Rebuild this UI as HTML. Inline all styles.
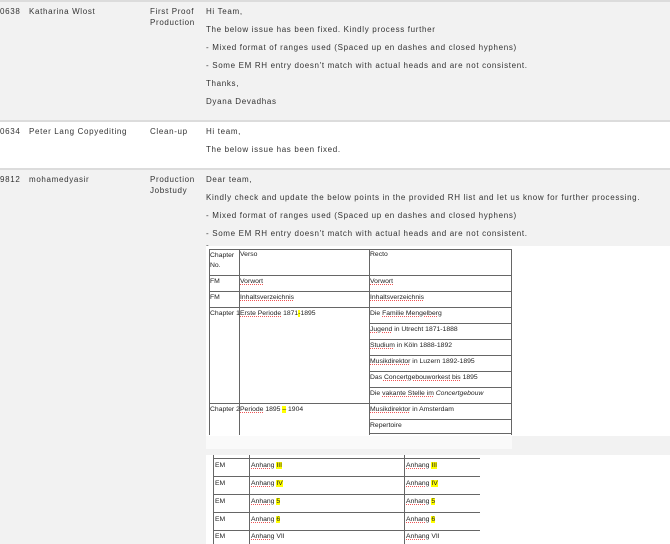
<!DOCTYPE html>
<html><head><meta charset="utf-8"><style>
*{margin:0;padding:0;box-sizing:border-box}
body{width:670px;height:544px;overflow:hidden;background:#f2f2f2;font-family:"Liberation Sans",Arial,sans-serif;font-size:8px;letter-spacing:0.66px;color:#333;position:relative}
.t{position:absolute;white-space:nowrap;line-height:10px}
.row2{position:absolute;left:0;top:121px;width:670px;height:47px;background:#fff}
.hl{position:absolute;left:0;width:670px;height:1.5px;background:#dcdcdc}
.img{position:absolute;background:#fff}
.tb{position:absolute;font-family:"Liberation Sans",sans-serif;font-size:6.8px;letter-spacing:0;color:#222}
.v{position:absolute;width:1px;background:#666}
.h{position:absolute;height:1px;background:#666}
.c{position:absolute;white-space:nowrap}
.u{text-decoration:underline dotted #e55;text-decoration-thickness:1px}
.y{background:#ff0}
</style></head><body>
<div class="hl" style="top:0"></div>
<div class="row2"></div>
<div class="hl" style="top:120px"></div>
<div class="hl" style="top:168px"></div>

<div class="t" style="left:0;top:7px">0638</div>
<div class="t" style="left:29px;top:7px">Katharina Wlost</div>
<div class="t" style="left:150px;top:7px">First Proof</div>
<div class="t" style="left:150px;top:18px">Production</div>
<div class="t" style="left:206px;top:7px">Hi Team,</div>
<div class="t" style="left:206px;top:25px">The below issue has been fixed. Kindly process further</div>
<div class="t" style="left:206px;top:43px">- Mixed format of ranges used (Spaced up en dashes and closed hyphens)</div>
<div class="t" style="left:206px;top:61px">- Some EM RH entry doesn't match with actual heads and are not consistent.</div>
<div class="t" style="left:206px;top:79px">Thanks,</div>
<div class="t" style="left:206px;top:97px">Dyana Devadhas</div>

<div class="t" style="left:0;top:127px">0634</div>
<div class="t" style="left:29px;top:127px">Peter Lang Copyediting</div>
<div class="t" style="left:150px;top:127px">Clean-up</div>
<div class="t" style="left:206px;top:127px">Hi team,</div>
<div class="t" style="left:206px;top:145px">The below issue has been fixed.</div>

<div class="t" style="left:0;top:175px">9812</div>
<div class="t" style="left:29px;top:175px">mohamedyasir</div>
<div class="t" style="left:150px;top:175px">Production</div>
<div class="t" style="left:150px;top:186px">Jobstudy</div>
<div class="t" style="left:206px;top:175px">Dear team,</div>
<div class="t" style="left:206px;top:193px">Kindly check and update the below points in the provided RH list and let us know for further processing.</div>
<div class="t" style="left:206px;top:211px">- Mixed format of ranges used (Spaced up en dashes and closed hyphens)</div>
<div class="t" style="left:206px;top:229px">- Some EM RH entry doesn't match with actual heads and are not consistent.</div>
<div class="t" style="left:206px;top:241px">-</div>

<div class="img" style="left:206px;top:246px;width:464px;height:190px"></div>
<div class="img" style="left:206px;top:436px;width:306px;height:13px;background:#fafafa"></div>
<div class="img" style="left:206px;top:455px;width:464px;height:89px"></div>

<div class="tb" style="left:0;top:0;width:670px;height:544px">
<div class="v" style="left:209px;top:249px;height:186px"></div>
<div class="v" style="left:239px;top:249px;height:186px"></div>
<div class="v" style="left:369px;top:249px;height:186px"></div>
<div class="v" style="left:511px;top:249px;height:186px"></div>
<div class="h" style="left:209px;top:249px;width:303px"></div>
<div class="h" style="left:209px;top:275px;width:303px"></div>
<div class="h" style="left:209px;top:291px;width:303px"></div>
<div class="h" style="left:209px;top:307px;width:303px"></div>
<div class="h" style="left:369px;top:323px;width:143px"></div>
<div class="h" style="left:369px;top:339px;width:143px"></div>
<div class="h" style="left:369px;top:355px;width:143px"></div>
<div class="h" style="left:369px;top:371px;width:143px"></div>
<div class="h" style="left:369px;top:387px;width:143px"></div>
<div class="h" style="left:209px;top:403px;width:303px"></div>
<div class="h" style="left:369px;top:419px;width:143px"></div>
<div class="h" style="left:369px;top:433px;width:143px"></div>
<div class="c" style="left:210px;top:251px;line-height:10px">Chapter<br>No.</div>
<div class="c" style="left:240px;top:251px">Verso</div>
<div class="c" style="left:370px;top:251px">Recto</div>
<div class="c" style="left:210px;top:278px">FM</div>
<div class="c u" style="left:240px;top:278px">Vorwort</div>
<div class="c u" style="left:370px;top:278px">Vorwort</div>
<div class="c" style="left:210px;top:294px">FM</div>
<div class="c u" style="left:240px;top:294px">Inhaltsverzeichnis</div>
<div class="c u" style="left:370px;top:294px">Inhaltsverzeichnis</div>
<div class="c" style="left:210px;top:310px">Chapter 1</div>
<div class="c" style="left:240px;top:310px"><span class="u">Erste Periode</span> 1871<span class="y">-</span>1895</div>
<div class="c" style="left:370px;top:310px">Die <span class="u">Familie Mengelberg</span></div>
<div class="c" style="left:370px;top:326px"><span class="u">Jugend</span> in Utrecht 1871-1888</div>
<div class="c" style="left:370px;top:342px"><span class="u">Studium</span> in Köln 1888-1892</div>
<div class="c" style="left:370px;top:358px"><span class="u">Musikdirektor</span> in Luzern 1892-1895</div>
<div class="c" style="left:370px;top:374px">Das <span class="u">Concertgebouworkest bis</span> 1895</div>
<div class="c" style="left:370px;top:390px">Die <span class="u">vakante Stelle im</span> <i>Concertgebouw</i></div>
<div class="c" style="left:210px;top:406px">Chapter 2</div>
<div class="c" style="left:240px;top:406px"><span class="u">Periode</span> 1895 <span class="y">–</span> 1904</div>
<div class="c" style="left:370px;top:406px"><span class="u">Musikdirektor</span> in Amsterdam</div>
<div class="c" style="left:370px;top:422px">Repertoire</div>

<div class="v" style="left:213px;top:455px;height:89px"></div>
<div class="v" style="left:249px;top:455px;height:89px"></div>
<div class="v" style="left:404px;top:455px;height:89px"></div>
<div class="h" style="left:213px;top:458px;width:267px"></div>
<div class="h" style="left:213px;top:476px;width:267px"></div>
<div class="h" style="left:213px;top:494px;width:267px"></div>
<div class="h" style="left:213px;top:512px;width:267px"></div>
<div class="h" style="left:213px;top:530px;width:267px"></div>
<div class="c" style="left:215px;top:462px">EM</div>
<div class="c" style="left:251px;top:462px"><span class="u">Anhang</span> <span class="y">III</span></div>
<div class="c" style="left:406px;top:462px"><span class="u">Anhang</span> <span class="y">III</span></div>
<div class="c" style="left:215px;top:480px">EM</div>
<div class="c" style="left:251px;top:480px"><span class="u">Anhang</span> <span class="y">IV</span></div>
<div class="c" style="left:406px;top:480px"><span class="u">Anhang</span> <span class="y">IV</span></div>
<div class="c" style="left:215px;top:498px">EM</div>
<div class="c" style="left:251px;top:498px"><span class="u">Anhang</span> <span class="y">5</span></div>
<div class="c" style="left:406px;top:498px"><span class="u">Anhang</span> <span class="y">5</span></div>
<div class="c" style="left:215px;top:516px">EM</div>
<div class="c" style="left:251px;top:516px"><span class="u">Anhang</span> <span class="y">6</span></div>
<div class="c" style="left:406px;top:516px"><span class="u">Anhang</span> <span class="y">6</span></div>
<div class="c" style="left:215px;top:533px">EM</div>
<div class="c" style="left:251px;top:533px"><span class="u">Anhang</span> VII</div>
<div class="c" style="left:406px;top:533px"><span class="u">Anhang</span> VII</div>
</div>
</body></html>
